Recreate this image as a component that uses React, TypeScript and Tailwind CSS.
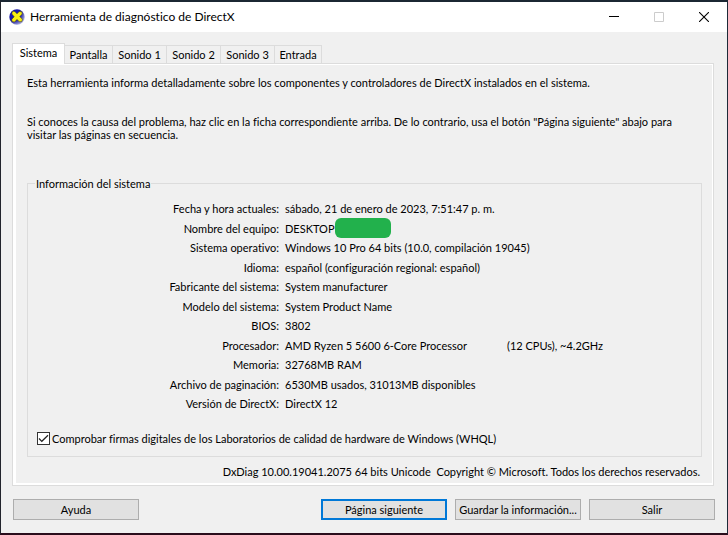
import { useState } from "react";

const tabs = [
  { name: "Sistema", width: "w-[53px]" },
  { name: "Pantalla", width: "w-12" },
  { name: "Sonido 1", width: "w-[54px]" },
  { name: "Sonido 2", width: "w-[54px]" },
  { name: "Sonido 3", width: "w-[54px]" },
  { name: "Entrada", width: "w-[47px]" },
];

const systemInfo = [
  { label: "Fecha y hora actuales:", value: "sábado, 21 de enero de 2023, 7:51:47 p. m." },
  { label: "Nombre del equipo:", value: "DESKTOP", hidden: true },
  { label: "Sistema operativo:", value: "Windows 10 Pro 64 bits (10.0, compilación 19045)" },
  { label: "Idioma:", value: "español (configuración regional: español)" },
  { label: "Fabricante del sistema:", value: "System manufacturer" },
  { label: "Modelo del sistema:", value: "System Product Name" },
  { label: "BIOS:", value: "3802" },
  { label: "Procesador:", value: "AMD Ryzen 5 5600 6-Core Processor", extra: "(12 CPUs), ~4.2GHz" },
  { label: "Memoria:", value: "32768MB RAM" },
  { label: "Archivo de paginación:", value: "6530MB usados, 31013MB disponibles" },
  { label: "Versión de DirectX:", value: "DirectX 12" },
];

const buttonStyle = "w-[126px] h-[21px] bg-[#e1e1e1] whitespace-nowrap text-center";

const DirectXIcon = () => (
  <svg width="16" height="16" viewBox="0 0 16 16" aria-hidden="true">
    <defs>
      <radialGradient id="ball" cx="0.3" cy="0.3" r="0.85">
        <stop offset="0" stopColor="#1717c8" />
        <stop offset="0.5" stopColor="#16169c" />
        <stop offset="1" stopColor="#d4d8ec" />
      </radialGradient>
    </defs>
    <circle cx="8" cy="8" r="7.7" fill="url(#ball)" />
    <path
      d="M3.4 2.2 5.8 2.4 8 4.8 10.2 2.6 12.8 2.8 13.2 5 10.8 7.6 13.4 10.2 12.8 12.6 10.4 12.8 8 10.4 5.6 13 3 12.6 2.8 10.2 5.2 7.8 2.8 5Z"
      fill="#f7ee12"
      stroke="#2b2a10"
      strokeWidth="0.5"
    />
  </svg>
);

const TitleBar = () => (
  <header className="flex h-[30px] items-center justify-between bg-white pl-2">
    <div className="flex items-center gap-[5px]">
      <DirectXIcon />
      <h1 className="text-[12px] leading-4">Herramienta de diagnóstico de DirectX</h1>
    </div>
    <div className="flex">
      <button aria-label="Minimizar" className="flex h-[30px] w-[45px] items-center justify-center">
        <svg width="10" height="10" viewBox="0 0 10 10" stroke="#000">
          <path d="M0 4.5H10" />
        </svg>
      </button>
      <button aria-label="Maximizar" disabled className="flex h-[30px] w-[45px] items-center justify-center">
        <svg width="10" height="10" viewBox="0 0 10 10" fill="none" stroke="#ccc">
          <path d="M.5 .5H9.5V9.5H.5Z" />
        </svg>
      </button>
      <button aria-label="Cerrar" className="flex h-[30px] w-[46px] items-center justify-center">
        <svg width="10" height="10" viewBox="0 0 10 10" stroke="#000" strokeWidth="1.1">
          <path d="M0 0 10 10M10 0 0 10" />
        </svg>
      </button>
    </div>
  </header>
);

const App = () => {
  const [activeTab, setActiveTab] = useState("Sistema");
  const [whql, setWhql] = useState(true);

  return (
    <div className="flex min-h-screen flex-col border-t-2 border-r border-b-2 border-l border-t-[#1b2733] border-r-[#1d2a38] border-b-[#2a0d1c] border-l-[#22242c] bg-[#f0f0f0] font-['Lato','Noto_Sans',sans-serif] text-[11px] leading-[13px] text-black [font-variant-ligatures:none]">
      <TitleBar />
      <main className="pt-[11px] pr-[13px] pl-[11px]">
        <div role="tablist" className="flex items-end">
          {tabs.map((tab) => (
            <button
              key={tab.name}
              role="tab"
              aria-selected={tab.name === activeTab}
              onClick={() => setActiveTab(tab.name)}
              className={`${tab.width} whitespace-nowrap border-t border-r border-[#dcdcdc] ${
                tab.name === activeTab ? "-mb-px h-[21px] border-l bg-white pb-[3px]" : "h-[18px]"
              }`}
            >
              {tab.name}
            </button>
          ))}
        </div>

        <div role="tabpanel" className="border border-[#dcdcdc] bg-white pt-px pr-px pb-[2px] pl-[3px]">
          <div className="bg-[#f0f0f0] pt-[11px] pr-[10px] pb-[5px] pl-[11px]">
            <p>Esta herramienta informa detalladamente sobre los componentes y controladores de DirectX instalados en el sistema.</p>
            <p className="mt-[26px]">
              Si conoces la causa del problema, haz clic en la ficha correspondiente arriba. De lo contrario, usa el botón "Página siguiente" abajo para visitar las páginas en secuencia.
            </p>

            <fieldset className="mt-9 border border-[#dcdcdc] pr-2 pb-[11px] pl-[7px]">
              <legend className="px-px">Información del sistema</legend>
              <dl className="mt-3 flex h-[208px] flex-col justify-between">
                {systemInfo.map((item) => (
                  <div key={item.label} className="flex h-[13px] items-center gap-[6px]">
                    <dt className="w-[244px] text-right">{item.label}</dt>
                    <dd className="flex items-center whitespace-nowrap">
                      {item.value}
                      {item.hidden && <span className="-my-1 h-5 w-14 rounded-md bg-[#22b14c]" />}
                      {item.extra && <span className="ml-10">{item.extra}</span>}
                    </dd>
                  </div>
                ))}
              </dl>
              <label className="mt-[22px] flex items-center gap-[2px] pl-[2px]">
                <span className="relative flex">
                  <input
                    type="checkbox"
                    checked={whql}
                    onChange={(e) => setWhql(e.target.checked)}
                    className="peer h-[13px] w-[13px] appearance-none border border-[#333] bg-white"
                  />
                  <svg className="pointer-events-none absolute inset-0 hidden peer-checked:block" width="13" height="13" viewBox="0 0 13 13" fill="none" stroke="#222" strokeWidth="1.2">
                    <path d="M2 6.5 4.8 9.3 11 3.2" />
                  </svg>
                </span>
                Comprobar firmas digitales de los Laboratorios de calidad de hardware de Windows (WHQL)
              </label>
            </fieldset>

            <p className="mt-2 whitespace-pre pr-[2px] text-right">
              DxDiag 10.00.19041.2075 64 bits Unicode{"  "}Copyright © Microsoft. Todos los derechos reservados.
            </p>
          </div>
        </div>
      </main>

      <footer className="flex justify-between px-3 pt-[13px] pb-3">
        <button className={`${buttonStyle} border border-[#adadad]`}>Ayuda</button>
        <div className="flex gap-2">
          <button className={`${buttonStyle} border-2 border-[#0078d7]`}>Página siguiente</button>
          <button className={`${buttonStyle} border border-[#adadad]`}>Guardar la información...</button>
          <button className={`${buttonStyle} border border-[#adadad]`}>Salir</button>
        </div>
      </footer>
    </div>
  );
};

export default App;
